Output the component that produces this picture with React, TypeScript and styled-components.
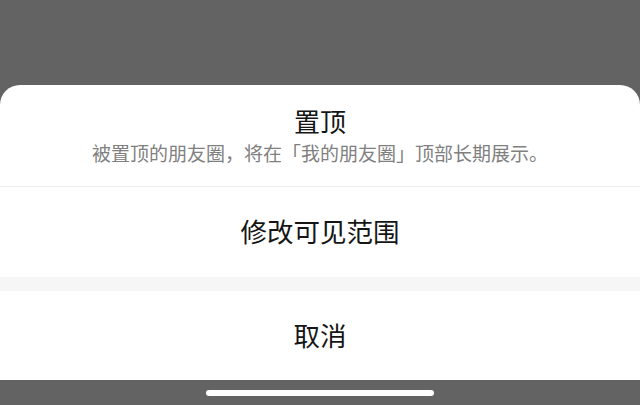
import styled, { createGlobalStyle } from "styled-components";

const GlobalStyle = createGlobalStyle`
  html, body {
    margin: 0;
    padding: 0;
    background: #636363;
  }
  body {
    font-family: "Noto Sans CJK SC", "Noto Sans", sans-serif;
  }
`;

const Screen = styled.div`
  width: 640px;
  height: 405px;
  display: flex;
  flex-direction: column;
  justify-content: flex-end;
  background: #636363;
  overflow: hidden;
`;

const Sheet = styled.div`
  display: flex;
  flex-direction: column;
  background: #ffffff;
  border-radius: 20px 20px 0 0;
`;

const Header = styled.div`
  display: flex;
  flex-direction: column;
  align-items: center;
  padding: 19px 0 18px;
  border-bottom: 1px solid #ececec;
`;

const Title = styled.div`
  font-size: 26px;
  line-height: 34px;
  color: #151515;
`;

const Subtitle = styled.div`
  font-size: 19px;
  line-height: 30px;
  color: #808080;
`;

const Action = styled.div<{ $height: number }>`
  height: ${({ $height }) => $height}px;
  box-sizing: border-box;
  padding-bottom: 3px;
  display: flex;
  align-items: center;
  justify-content: center;
  font-size: 26.5px;
  color: #151515;
`;

const Gap = styled.div`
  height: 14px;
  background: #f6f6f6;
`;

const HomeArea = styled.div`
  height: 25px;
  display: flex;
  justify-content: center;
  padding-top: 10px;
  box-sizing: border-box;
`;

const HomeIndicator = styled.div`
  width: 228px;
  height: 6px;
  border-radius: 3px;
  background: #ffffff;
`;

export default function App() {
  return (
    <>
      <GlobalStyle />
      <Screen>
        <Sheet>
          <Header>
            <Title>置顶</Title>
            <Subtitle>被置顶的朋友圈，将在「我的朋友圈」顶部长期展示。</Subtitle>
          </Header>
          <Action $height={90}>修改可见范围</Action>
          <Gap />
          <Action $height={89}>取消</Action>
        </Sheet>
        <HomeArea>
          <HomeIndicator />
        </HomeArea>
      </Screen>
    </>
  );
}
